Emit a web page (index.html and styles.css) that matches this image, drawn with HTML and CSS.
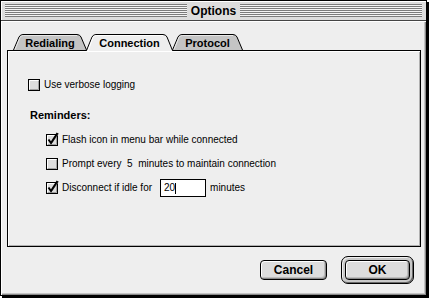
FILE: index.html
```html
<!DOCTYPE html>
<html>
<head>
<meta charset="utf-8">
<title>Options</title>
<link rel="stylesheet" href="styles.css">
</head>
<body>
<div class="window">
  <div class="titlebar">
    <div class="stripes"></div>
    <div class="title">Options</div>
    <div class="stripes"></div>
  </div>
  <div class="content">
    <div class="tabs">
      <div class="tab tab-1">
        <svg class="tab-shape" width="74" height="17" viewBox="0 0 74 17">
          <path d="M0.5 16 L6 3 Q7.2 0.5 10 0.5 H64 Q66.8 0.5 68 3 L73.5 16" fill="#c4c4c4" stroke="#000"/>
          <path d="M2 15.5 L7 3.5 Q8 1.5 10.5 1.5 H64" fill="none" stroke="#e8e8e8"/>
        </svg>
        <span>Redialing</span>
      </div>
      <div class="tab tab-2 active">
        <svg class="tab-shape" width="87" height="17" viewBox="0 0 87 17">
          <path d="M0.5 17 L0.5 16.5 L6 3 Q7.2 0.5 10 0.5 H77 Q79.8 0.5 81 3 L86.5 16.5 L86.5 17" fill="#eeeeee" stroke="#000"/>
          <path d="M2 17 L7 3.5 Q8 1.5 10.5 1.5 H77" fill="none" stroke="#fff"/>
        </svg>
        <span>Connection</span>
      </div>
      <div class="tab tab-3">
        <svg class="tab-shape" width="71" height="17" viewBox="0 0 71 17">
          <path d="M0.5 16 L6 3 Q7.2 0.5 10 0.5 H61 Q63.8 0.5 65 3 L70.5 16" fill="#c4c4c4" stroke="#000"/>
          <path d="M2 15.5 L7 3.5 Q8 1.5 10.5 1.5 H61" fill="none" stroke="#e8e8e8"/>
        </svg>
        <span>Protocol</span>
      </div>
    </div>
    <div class="panel">
      <div class="check-row verbose">
        <svg class="cb" width="12" height="12" viewBox="0 0 12 12">
          <rect x="0.5" y="0.5" width="11" height="11" fill="#dcdcdc" stroke="#000"/>
          <path d="M1.5 10 V1.5 H10" fill="none" stroke="#fff"/>
          <path d="M2 10.5 H10.5 V2" fill="none" stroke="#a0a0a0"/>
        </svg>
        <span>Use verbose logging</span>
      </div>
      <div class="group-label">Reminders:</div>
      <div class="indent">
        <div class="check-row">
          <svg class="cb" width="12" height="12" viewBox="0 0 12 12">
            <rect x="0.5" y="0.5" width="11" height="11" fill="#dcdcdc" stroke="#000"/>
            <path d="M1.5 10 V1.5 H10" fill="none" stroke="#fff"/>
            <path d="M2 10.5 H10.5 V2" fill="none" stroke="#a0a0a0"/>
            <path d="M3.5 6.5 L5.5 9.5 L12.5 -0.5" fill="none" stroke="#777" stroke-width="1"/>
            <path d="M2.5 5.5 L5 9 L11.5 -1" fill="none" stroke="#000" stroke-width="2"/>
          </svg>
          <span>Flash icon in menu bar while connected</span>
        </div>
        <div class="check-row">
          <svg class="cb" width="12" height="12" viewBox="0 0 12 12">
            <rect x="0.5" y="0.5" width="11" height="11" fill="#dcdcdc" stroke="#000"/>
            <path d="M1.5 10 V1.5 H10" fill="none" stroke="#fff"/>
            <path d="M2 10.5 H10.5 V2" fill="none" stroke="#a0a0a0"/>
          </svg>
          <span>Prompt every&nbsp; 5 &nbsp;minutes to maintain connection</span>
        </div>
        <div class="check-row with-field">
          <svg class="cb" width="12" height="12" viewBox="0 0 12 12">
            <rect x="0.5" y="0.5" width="11" height="11" fill="#dcdcdc" stroke="#000"/>
            <path d="M1.5 10 V1.5 H10" fill="none" stroke="#fff"/>
            <path d="M2 10.5 H10.5 V2" fill="none" stroke="#a0a0a0"/>
            <path d="M3.5 6.5 L5.5 9.5 L12.5 -0.5" fill="none" stroke="#777" stroke-width="1"/>
            <path d="M2.5 5.5 L5 9 L11.5 -1" fill="none" stroke="#000" stroke-width="2"/>
          </svg>
          <span>Disconnect if idle for</span>
          <span class="field">20<span class="caret"></span></span>
          <span>minutes</span>
        </div>
      </div>
    </div>
    <div class="buttons">
      <div class="btn cancel">Cancel</div>
      <div class="default-ring"><div class="btn">OK</div></div>
    </div>
  </div>
</div>
</body>
</html>
```

FILE: styles.css
```css
* { box-sizing: border-box; }
html, body { margin: 0; padding: 0; }
body {
  width: 429px;
  height: 298px;
  overflow: hidden;
  background: #fff;
  font-family: "Liberation Sans", Arial, sans-serif;
  font-size: 10px;
  color: #000;
}
.window {
  width: 427px;
  height: 296px;
  border: 1px solid #000;
  box-shadow: 2px 2px 0 #000;
  background: #eeeeee;
  display: flex;
  flex-direction: column;
}
.titlebar {
  height: 20px;
  flex: none;
  border-bottom: 1px solid #444;
  background: #dddddd;
  box-shadow: inset 1px 1px 0 #fff;
  display: flex;
  align-items: center;
  padding: 0 4px;
}
.stripes {
  flex: 1;
  height: 13px;
  background: repeating-linear-gradient(to bottom, #7c7c7c 0 1px, #f4f4f4 1px 2px);
}
.title {
  font-weight: bold;
  font-size: 12px;
  line-height: 14px;
  padding: 0 4px;
}
.content {
  flex: 1;
  display: flex;
  flex-direction: column;
  padding: 13px 5px 0 6px;
  box-shadow: inset 1px 1px 0 #fff, inset -1px -1px 0 #8a8a8a, inset -2px -2px 0 #c4c4c4;
}
.tabs {
  display: flex;
  height: 16px;
  flex: none;
  padding-left: 6px;
  position: relative;
  z-index: 2;
}
.tab {
  position: relative;
  height: 16px;
  display: flex;
  align-items: center;
  justify-content: center;
  font-weight: bold;
  font-size: 11px;
  padding-top: 1px;
}
.tab + .tab { margin-left: -1px; }
.tab.active { z-index: 1; }
.tab-1 { width: 74px; }
.tab-2 { width: 87px; }
.tab-3 { width: 71px; }
.tab-shape { position: absolute; left: 0; top: 0; }
.tab span { position: relative; }
.panel {
  height: 197px;
  flex: none;
  border: 1px solid #000;
  box-shadow: inset 1px 1px 0 #fff, inset -1px -1px 0 #b0b0b0;
  position: relative;
  z-index: 1;
  padding: 28px 0 0 20px;
  display: flex;
  flex-direction: column;
  align-items: flex-start;
}
.check-row {
  display: flex;
  align-items: center;
  height: 12px;
  gap: 4px;
  white-space: nowrap;
  line-height: 12px;
}
.cb { flex: none; overflow: visible; }
.group-label {
  font-weight: bold;
  font-size: 11px;
  line-height: 14px;
  margin: 17px 0 0 2px;
}
.indent {
  margin: 12px 0 0 18px;
  display: flex;
  flex-direction: column;
  gap: 12px;
}
.check-row.with-field { height: 18px; margin-top: -3px; }
.field {
  width: 46px;
  height: 18px;
  border: 1px solid #000;
  background: #fff;
  margin: 0 0 0 4px;
  padding-left: 3px;
  display: flex;
  align-items: center;
}
.caret {
  width: 1px;
  height: 11px;
  background: #000;
}
.buttons {
  display: flex;
  justify-content: flex-end;
  align-items: center;
  gap: 14px;
  height: 28px;
  margin-top: 9px;
  padding-right: 7px;
  flex: none;
}
.btn {
  height: 20px;
  border: 1px solid #000;
  border-radius: 4px;
  background: #dddddd;
  display: flex;
  align-items: center;
  justify-content: center;
  font-weight: bold;
  font-size: 12px;
  box-shadow: inset 1px 1px 0 #fff, inset -1px -1px 0 #8a8a8a, inset -2px -2px 0 #bdbdbd;
}
.cancel { width: 67px; }
.default-ring {
  width: 73px;
  height: 28px;
  border: 1px solid #000;
  border-radius: 7px;
  padding: 3px;
  background: #c8c8c8;
  box-shadow: inset 1px 1px 0 #f0f0f0, inset -1px -1px 0 #6a6a6a;
}
.default-ring .btn { width: 100%; height: 100%; }
```
